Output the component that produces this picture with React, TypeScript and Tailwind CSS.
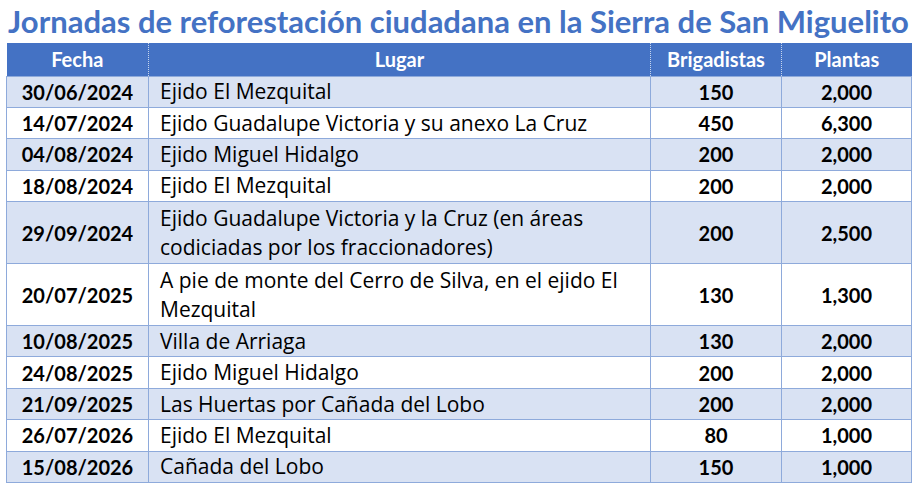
const rows = [
  { fecha: '30/06/2024', lugar: 'Ejido El Mezquital', brig: '150', plantas: '2,000' },
  { fecha: '14/07/2024', lugar: 'Ejido Guadalupe Victoria y su anexo La Cruz', brig: '450', plantas: '6,300' },
  { fecha: '04/08/2024', lugar: 'Ejido Miguel Hidalgo', brig: '200', plantas: '2,000' },
  { fecha: '18/08/2024', lugar: 'Ejido El Mezquital', brig: '200', plantas: '2,000' },
  {
    fecha: '29/09/2024',
    lugar: 'Ejido Guadalupe Victoria y la Cruz (en áreas codiciadas por los fraccionadores)',
    brig: '200',
    plantas: '2,500',
    tall: true,
  },
  {
    fecha: '20/07/2025',
    lugar: 'A pie de monte del Cerro de Silva, en el ejido El Mezquital',
    brig: '130',
    plantas: '1,300',
    tall: true,
  },
  { fecha: '10/08/2025', lugar: 'Villa de Arriaga', brig: '130', plantas: '2,000' },
  { fecha: '24/08/2025', lugar: 'Ejido Miguel Hidalgo', brig: '200', plantas: '2,000' },
  { fecha: '21/09/2025', lugar: 'Las Huertas por Cañada del Lobo', brig: '200', plantas: '2,000' },
  { fecha: '26/07/2026', lugar: 'Ejido El Mezquital', brig: '80', plantas: '1,000' },
  { fecha: '15/08/2026', lugar: 'Cañada del Lobo', brig: '150', plantas: '1,000' },
];

export default function App() {
  return (
    <div className="h-[493px] w-[917px] bg-white px-[6px] font-['Lato',sans-serif] text-black">
      <h1 className="pt-[5px] text-center text-[31px] font-bold leading-[33px] text-[#4472c4]">
        Jornadas de reforestación ciudadana en la Sierra de San Miguelito
      </h1>
      <table className="mt-[5px] w-[905px] table-fixed border-collapse text-[20px]">
        <colgroup>
          <col className="w-[142px]" />
          <col className="w-[502px]" />
          <col className="w-[131px]" />
          <col className="w-[130px]" />
        </colgroup>
        <thead>
          <tr className="h-[33px] bg-[#4472c4] font-bold text-white">
            <th className="border-r border-dotted border-r-white/70 text-center">Fecha</th>
            <th className="border-r border-dotted border-r-white/70 text-center">Lugar</th>
            <th className="border-r border-dotted border-r-white/70 text-center">Brigadistas</th>
            <th className="text-center">Plantas</th>
          </tr>
        </thead>
        <tbody>
          {rows.map((r, i) => (
            <tr key={i} className={`${r.tall ? 'h-[62px]' : 'h-[31.4px]'} ${i % 2 === 0 ? 'bg-[#d9e2f3]' : 'bg-white'}`}>
              <td className="border border-[#8eaadb] text-center font-bold">{r.fecha}</td>
              <td className="border border-[#8eaadb] px-[11px] font-['Open_Sans',sans-serif] text-[21px] leading-[29px]">
                {r.lugar}
              </td>
              <td className="border border-[#8eaadb] text-center font-bold">{r.brig}</td>
              <td className="border border-[#8eaadb] text-center font-bold">{r.plantas}</td>
            </tr>
          ))}
        </tbody>
      </table>
    </div>
  );
}
